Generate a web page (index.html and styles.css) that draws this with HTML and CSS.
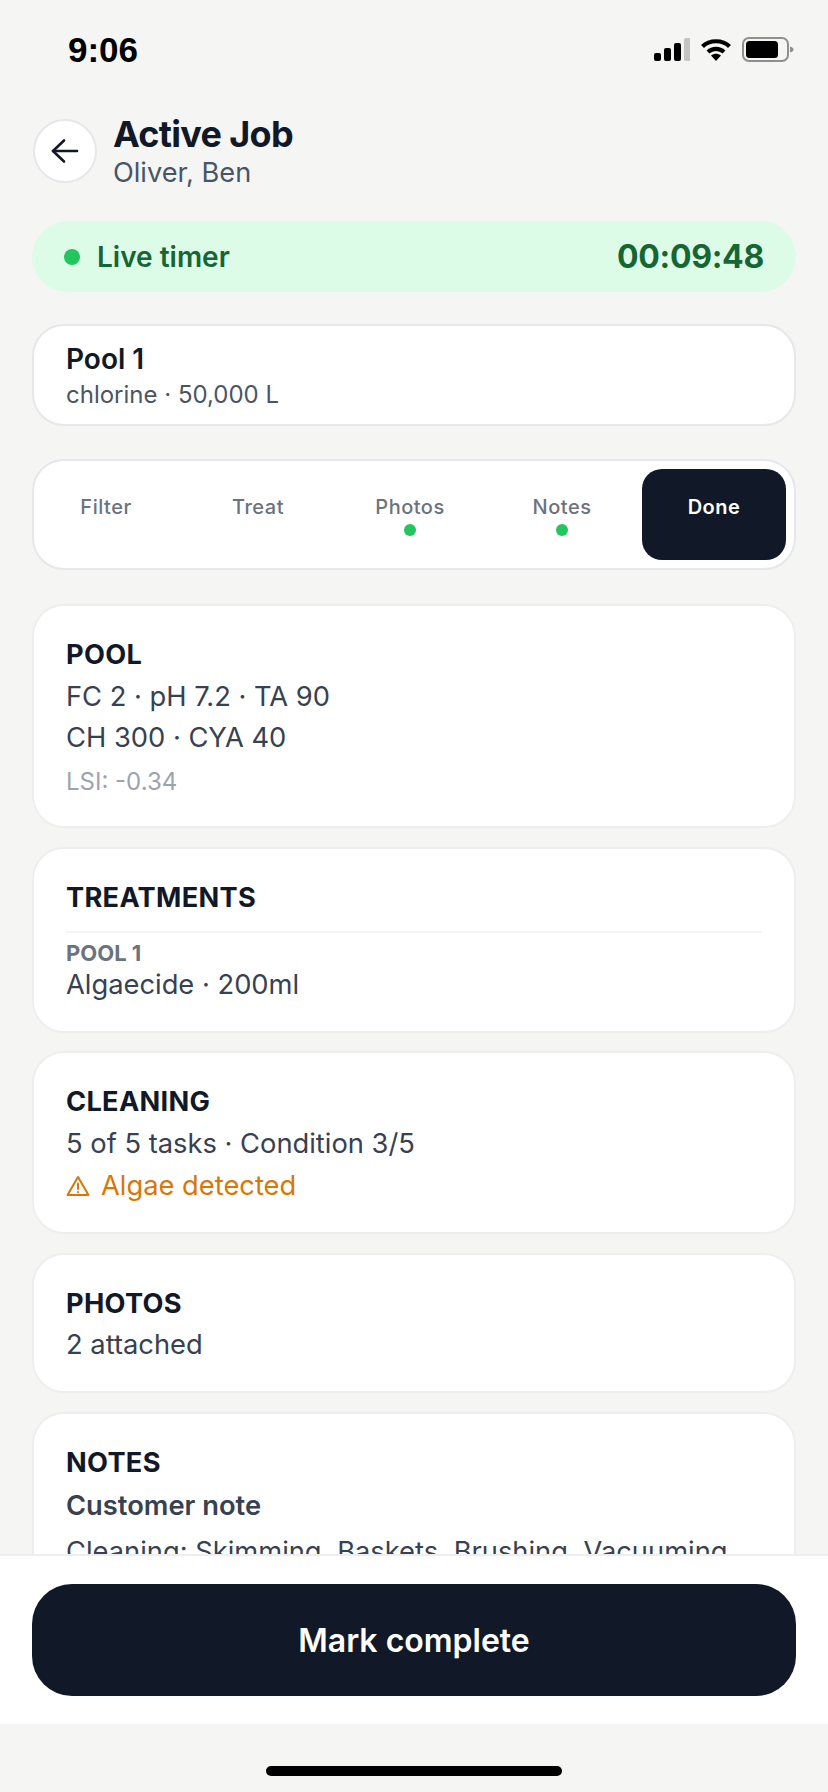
FILE: index.html
```html
<!DOCTYPE html>
<html>
  <head>
    <meta charset="utf-8">
    <title>Active Job</title>
    <link rel="stylesheet" href="styles.css">
  </head>
  <body>
    <div class="screen">
      <div class="status-bar">
        <span class="clock">9:06</span>
        <div class="status-icons">
          <svg width="36" height="24" viewBox="0 0 36 24">
            <rect x="0" y="15" width="7" height="8" rx="2" fill="#000"/>
            <rect x="10" y="10" width="7" height="13" rx="2" fill="#000"/>
            <rect x="20" y="5" width="7" height="18" rx="2" fill="#000"/>
            <rect x="30" y="0" width="7" height="23" rx="2" fill="#c4c4c4"/>
          </svg>
          <svg width="32" height="24" viewBox="0 0 32 24" fill="none">
            <path d="M2.5 8.5C9.5 1.5 22.5 1.5 29.5 8.5" stroke="#000" stroke-width="4.2"/>
            <path d="M8 14C12.5 9.8 19.5 9.8 24 14" stroke="#000" stroke-width="4.2"/>
            <path d="M11 17.5C14 15 18 15 21 17.5L16 23Z" fill="#000"/>
          </svg>
          <svg width="52" height="26" viewBox="0 0 52 26" fill="none">
            <rect x="1" y="1" width="45" height="23" rx="6" stroke="#8f8f8f" stroke-width="2"/>
            <rect x="4" y="4" width="32" height="17" rx="3.5" fill="#000"/>
            <path d="M48 9.5C50 10 51.5 11 51.5 12.5C51.5 14 50 15 48 15.5Z" fill="#8f8f8f"/>
          </svg>
        </div>
      </div>

      <div class="header">
        <button class="back-btn">
          <svg width="30" height="30" viewBox="0 0 30 30" fill="none" stroke="#111827" stroke-width="2.6" stroke-linecap="round" stroke-linejoin="round">
            <path d="M27 15H3"/>
            <path d="M14 4.5L3 15L14 25.5"/>
          </svg>
        </button>
        <div class="header-text">
          <h1 class="title">Active Job</h1>
          <p class="subtitle">Oliver, Ben</p>
        </div>
      </div>

      <div class="content">
        <div class="timer">
          <div class="timer-label"><span class="timer-dot"></span>Live timer</div>
          <div class="timer-value">00:09:48</div>
        </div>

        <div class="card pool-card">
          <div class="pool-name">Pool 1</div>
          <div class="pool-meta">chlorine · 50,000 L</div>
        </div>

        <div class="card tabs">
          <div class="tab">Filter</div>
          <div class="tab">Treat</div>
          <div class="tab">Photos<span class="tab-dot"></span></div>
          <div class="tab">Notes<span class="tab-dot"></span></div>
          <div class="tab tab-active">Done</div>
        </div>

        <div class="summary">
          <div class="card section">
            <h2>POOL</h2>
            <p>FC 2 · pH 7.2 · TA 90</p>
            <p>CH 300 · CYA 40</p>
            <p class="muted">LSI: -0.34</p>
          </div>

          <div class="card section">
            <h2 class="with-rule">TREATMENTS</h2>
            <div class="group-label">POOL 1</div>
            <p class="tight">Algaecide · 200ml</p>
          </div>

          <div class="card section">
            <h2>CLEANING</h2>
            <p>5 of 5 tasks · Condition 3/5</p>
            <p class="warning">
              <svg width="24" height="24" viewBox="0 0 24 24" fill="none" stroke="#d97706" stroke-width="2" stroke-linejoin="round" stroke-linecap="round">
                <path d="M12 3L22.5 21H1.5Z"/>
                <path d="M12 9.5V15"/>
                <path d="M12 18V18.2"/>
              </svg>
              Algae detected
            </p>
          </div>

          <div class="card section">
            <h2>PHOTOS</h2>
            <p>2 attached</p>
          </div>

          <div class="card section">
            <h2>NOTES</h2>
            <p class="note-title">Customer note</p>
            <p class="note-body">Cleaning: Skimming, Baskets, Brushing, Vacuuming</p>
          </div>
        </div>
      </div>

      <div class="footer">
        <button class="complete-btn">Mark complete</button>
      </div>

      <div class="home-area">
        <div class="home-bar"></div>
      </div>
    </div>
  </body>
</html>
```

FILE: styles.css
```css
* {
  box-sizing: border-box;
}

body,
html {
  margin: 0;
  padding: 0;
  background-color: #f5f5f4;
}

body {
  font-family: Inter, "Liberation Sans", sans-serif;
  color: #111827;
}

h1,
h2,
p {
  margin: 0;
}

.screen {
  display: flex;
  flex-direction: column;
  width: 828px;
  height: 1792px;
  overflow: hidden;
}

.status-bar {
  display: flex;
  justify-content: space-between;
  align-items: center;
  height: 100px;
  padding: 0 34px 0 68px;
  flex-shrink: 0;
}

.clock {
  font-family: "Liberation Sans", sans-serif;
  font-size: 35px;
  font-weight: 700;
  color: #000;
}

.status-icons {
  display: flex;
  align-items: center;
  gap: 10px;
}

.header {
  display: flex;
  align-items: center;
  gap: 16px;
  padding: 11px 32px 0 33px;
  flex-shrink: 0;
}

.back-btn {
  display: flex;
  align-items: center;
  justify-content: center;
  width: 64px;
  height: 64px;
  padding: 0;
  border: 2px solid #e5e7eb;
  border-radius: 50%;
  background-color: #fff;
}

.header-text {
  padding-top: 3px;
}

.title {
  font-size: 36px;
  line-height: 40px;
  font-weight: 700;
  letter-spacing: -0.7px;
  color: #111827;
}

.subtitle {
  margin-top: 1px;
  font-size: 27.2px;
  line-height: 36px;
  color: #475569;
}

.content {
  display: flex;
  flex-direction: column;
  flex: 1;
  min-height: 0;
  overflow: hidden;
  padding: 30px 32px 0 32px;
}

.timer {
  display: flex;
  justify-content: space-between;
  align-items: center;
  flex-shrink: 0;
  height: 71px;
  padding: 0 32px;
  border-radius: 36px;
  background-color: #dcfce7;
}

.timer-label {
  display: flex;
  align-items: center;
  gap: 17px;
  font-size: 28px;
  font-weight: 600;
  color: #166534;
}

.timer-dot {
  width: 16px;
  height: 16px;
  border-radius: 50%;
  background-color: #22c55e;
}

.timer-value {
  font-size: 32px;
  font-weight: 700;
  letter-spacing: -0.3px;
  color: #166534;
}

.card {
  flex-shrink: 0;
  border: 2px solid #e5e7eb;
  border-radius: 32px;
  background-color: #fff;
}

.pool-card {
  height: 102px;
  margin-top: 32px;
  padding: 16px 32px 0 32px;
}

.pool-name {
  font-size: 28px;
  line-height: 34px;
  font-weight: 600;
  color: #111827;
}

.pool-meta {
  margin-top: 2px;
  font-size: 24px;
  line-height: 34px;
  color: #4b5563;
}

.tabs {
  display: flex;
  gap: 8px;
  height: 111px;
  margin-top: 33px;
  padding: 8px 8px 8px 0;
}

.tab {
  display: flex;
  flex-direction: column;
  align-items: center;
  flex: 1;
  padding-top: 24px;
  border-radius: 20px;
  font-size: 20px;
  line-height: 28px;
  font-weight: 500;
  letter-spacing: 0.5px;
  color: #6b7280;
}

.tab-active {
  background-color: #111827;
  font-weight: 600;
  color: #fff;
}

.tab-dot {
  width: 12px;
  height: 12px;
  margin-top: 3px;
  border-radius: 50%;
  background-color: #22c55e;
}

.summary {
  display: flex;
  flex-direction: column;
  gap: 18.6px;
  margin-top: 34px;
}

.section {
  padding: 31px 32px 28px 32px;
  border-color: #eeeeee;
}

.section h2 {
  font-size: 27.2px;
  line-height: 36px;
  font-weight: 700;
  letter-spacing: 0.3px;
  color: #111827;
}

.section p {
  margin-top: 5.5px;
  font-size: 27.3px;
  line-height: 36px;
  color: #374151;
}

.section p.muted {
  margin-top: 10px;
  font-size: 24px;
  line-height: 32px;
  color: #9ca3af;
}

.section h2.with-rule {
  padding-bottom: 15px;
  border-bottom: 2px solid #f3f4f6;
}

.group-label {
  margin-top: 8px;
  font-size: 22px;
  line-height: 24px;
  font-weight: 700;
  color: #6b7280;
}

.section p.tight {
  margin-top: 2px;
}

.section p.warning {
  display: flex;
  align-items: center;
  gap: 11px;
  margin-top: 6.5px;
  color: #d97706;
}

.section p.note-title {
  margin-top: 7px;
  font-weight: 600;
}

.section p.note-body {
  margin-top: 10px;
  white-space: nowrap;
}

.footer {
  flex-shrink: 0;
  height: 170px;
  padding: 28px 32px 0 32px;
  border-top: 2px solid #eeeeee;
  background-color: #fff;
}

.complete-btn {
  display: block;
  width: 100%;
  height: 112px;
  border: none;
  border-radius: 40px;
  background-color: #111827;
  font-family: Inter, "Liberation Sans", sans-serif;
  font-size: 32px;
  font-weight: 600;
  color: #fff;
}

.home-area {
  display: flex;
  justify-content: center;
  flex-shrink: 0;
  height: 68px;
  padding-top: 42px;
}

.home-bar {
  width: 296px;
  height: 10px;
  border-radius: 5px;
  background-color: #000;
}
```
